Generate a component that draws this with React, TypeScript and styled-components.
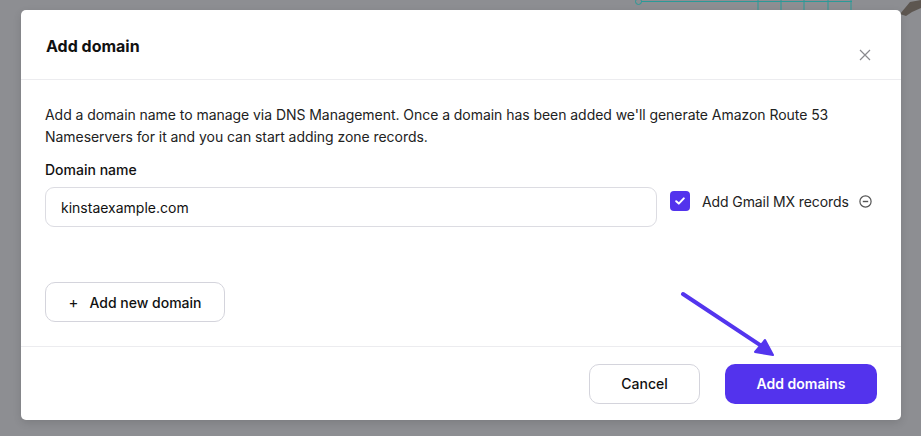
import React from 'react';
import styled, {createGlobalStyle} from "styled-components";

const GlobalStyle = createGlobalStyle`
    * { box-sizing: border-box; }
    html, body {
        margin: 0;
        padding: 0;
        background: #8d8e92;
        font-family: Inter, "Noto Sans", sans-serif;
    }
`

export default function App() {
    return (
        <>
            <GlobalStyle/>
            <Overlay>
                <Backdrop width="921" height="436" viewBox="0 0 921 436">
                    <line x1="641" y1="1.5" x2="852" y2="1.5" stroke="#2a9a98" strokeWidth="1"/>
                    <circle cx="638.5" cy="1.5" r="3" fill="none" stroke="#2a9a98" strokeWidth="1"/>
                    {[758, 781, 804, 828, 851].map(x => (
                        <line key={x} x1={x} y1="0" x2={x} y2="10" stroke="#2a9a98" strokeWidth="1"/>
                    ))}
                    <path d="M900 14 L910 2 L921 0 L921 8 L912 12 L906 16 Z" fill="#5d5650"/>
                </Backdrop>
                <Modal>
                    <Header>
                        <Title>Add domain</Title>
                        <CloseButton aria-label="Close">
                            <svg width="12" height="12" viewBox="0 0 12 12">
                                <path d="M1 1 L11 11 M11 1 L1 11" stroke="#8a8a8e" strokeWidth="1.2"/>
                            </svg>
                        </CloseButton>
                    </Header>
                    <Body>
                        <Description>
                            Add a domain name to manage via DNS Management. Once a domain has been added we'll generate Amazon Route 53 Nameservers for it and you can start adding zone records.
                        </Description>
                        <Label>Domain name</Label>
                        <FieldRow>
                            <Input defaultValue="kinstaexample.com"/>
                            <CheckGroup>
                                <CheckBox>
                                    <svg width="10" height="8" viewBox="0 0 10 8">
                                        <path d="M1.2 4.2 L3.8 6.6 L8.8 1.4" fill="none" stroke="#fff" strokeWidth="2" strokeLinecap="round" strokeLinejoin="round"/>
                                    </svg>
                                </CheckBox>
                                <CheckLabel>Add Gmail MX records</CheckLabel>
                                <svg width="13" height="13" viewBox="0 0 13 13">
                                    <circle cx="6.5" cy="6.5" r="5.6" fill="none" stroke="#555" strokeWidth="1.2"/>
                                    <line x1="3.8" y1="6.5" x2="9.2" y2="6.5" stroke="#555" strokeWidth="1.4"/>
                                </svg>
                            </CheckGroup>
                        </FieldRow>
                        <GhostButton>
                            <Plus>+</Plus>
                            Add new domain
                        </GhostButton>
                    </Body>
                    <Footer>
                        <SecondaryButton>Cancel</SecondaryButton>
                        <PrimaryButton>Add domains</PrimaryButton>
                    </Footer>
                    <Arrow width="110" height="80" viewBox="0 0 110 80">
                        <line x1="6" y1="6" x2="92" y2="63" stroke="#5335ee" strokeWidth="4" strokeLinecap="round"/>
                        <path d="M96 67 L78 64 L88 52 Z" fill="#5335ee" stroke="#5335ee" strokeWidth="2" strokeLinejoin="round"/>
                    </Arrow>
                </Modal>
            </Overlay>
        </>
    );
}

const Overlay = styled.div`
    position: relative;
    width: 921px;
    height: 436px;
    padding: 10px 20px 0 21px;
    overflow: hidden;
`

const Backdrop = styled.svg`
    position: absolute;
    left: 0;
    top: 0;
`

const Modal = styled.div`
    position: relative;
    width: 880px;
    height: 410px;
    background: #fff;
    border-radius: 5px;
    box-shadow: 0 3px 8px rgba(0, 0, 0, 0.12);
    display: flex;
    flex-direction: column;
`

const Header = styled.div`
    height: 70px;
    padding: 0 30px 0 25px;
    display: flex;
    align-items: flex-start;
    justify-content: space-between;
    border-bottom: 1px solid #ececef;
`

const Title = styled.h2`
    margin: 25px 0 0;
    font-size: 16px;
    line-height: 22px;
    font-weight: 700;
    color: #111;
`

const CloseButton = styled.button`
    margin-top: 39px;
    padding: 0;
    border: none;
    background: none;
    width: 12px;
    height: 12px;
    display: flex;
`

const Body = styled.div`
    flex: 1;
    padding: 24px 25px 24px 24px;
    display: flex;
    flex-direction: column;
    border-bottom: 1px solid #ececef;
`

const Description = styled.p`
    margin: 0;
    font-size: 14px;
    line-height: 22px;
    letter-spacing: -0.05px;
    color: #222;
`

const Label = styled.div`
    margin-top: 12px;
    font-size: 14px;
    line-height: 20px;
    font-weight: 500;
    color: #111;
`

const FieldRow = styled.div`
    margin-top: 7px;
    display: flex;
    align-items: center;
    gap: 13px;
`

const Input = styled.input`
    flex: 1;
    height: 40px;
    border: 1px solid #dcdce2;
    border-radius: 9px;
    padding: 0 15px;
    font-family: Inter, sans-serif;
    font-size: 14px;
    color: #111;
    outline: none;
`

const CheckGroup = styled.div`
    width: 206px;
    margin-top: -12px;
    display: flex;
    align-items: center;
`

const CheckBox = styled.span`
    width: 20px;
    height: 20px;
    border-radius: 4px;
    background: #5333ed;
    display: flex;
    align-items: center;
    justify-content: center;
    margin-right: 12px;
`

const CheckLabel = styled.span`
    font-size: 14px;
    letter-spacing: -0.1px;
    color: #222;
    margin-right: 10px;
`

const GhostButton = styled.button`
    margin-top: auto;
    align-self: flex-start;
    width: 180px;
    height: 40px;
    border: 1px solid #d4d4dc;
    border-radius: 10px;
    background: #fff;
    display: flex;
    align-items: center;
    justify-content: center;
    gap: 11px;
    font-family: Inter, sans-serif;
    font-size: 14px;
    font-weight: 500;
    color: #111;
`

const Plus = styled.span`
    font-size: 15px;
    font-weight: 400;
`

const Footer = styled.div`
    height: 73px;
    padding: 0 24px 0 0;
    display: flex;
    align-items: center;
    justify-content: flex-end;
    gap: 25px;
`

const BaseButton = styled.button`
    height: 40px;
    border-radius: 10px;
    font-family: Inter, sans-serif;
    font-size: 14px;
    font-weight: 600;
`

const SecondaryButton = styled(BaseButton)`
    width: 111px;
    background: #fff;
    border: 1px solid #d4d4dc;
    color: #111;
    font-weight: 500;
`

const PrimaryButton = styled(BaseButton)`
    width: 152px;
    background: #5333ed;
    border: none;
    color: #fff;
`

const Arrow = styled.svg`
    position: absolute;
    left: 656px;
    top: 278px;
`
